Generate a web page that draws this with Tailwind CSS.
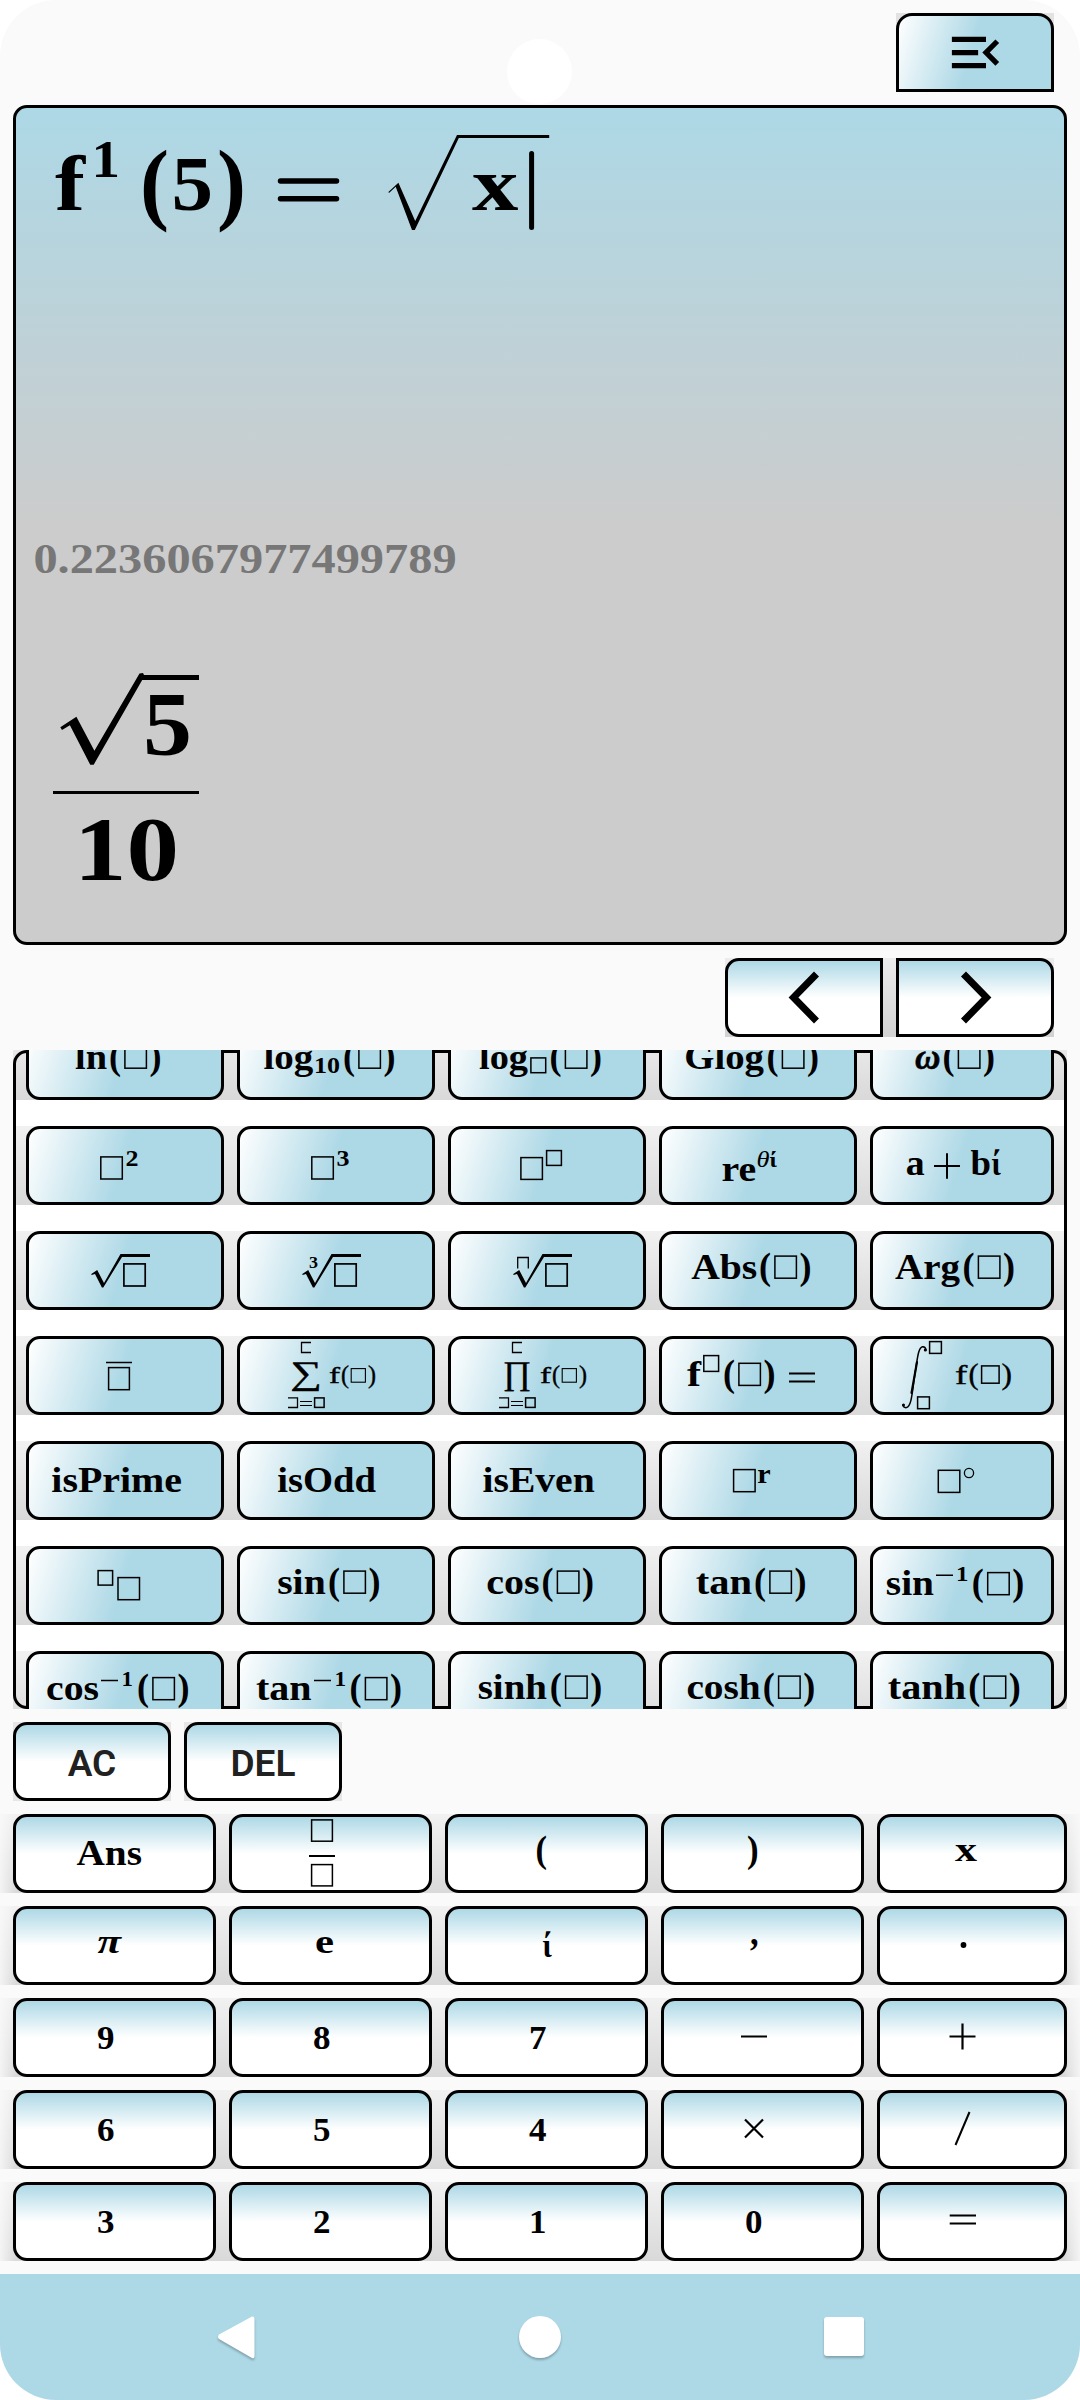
<!DOCTYPE html>
<html lang="en">
<head>
<meta charset="utf-8">
<title>Calculator</title>
<script src="https://cdn.jsdelivr.net/npm/@tailwindcss/browser@4"></script>
</head>
<body class="bg-white">
<main class="relative flex h-[2400px] w-[1080px] flex-col overflow-hidden rounded-[56px] bg-[#fafafa] font-['Liberation_Serif',serif]">
  <!-- camera cut-out -->
  <div class="absolute left-[507px] top-[39px] size-[65px] rounded-full bg-white"></div>

  <header class="flex h-[105px] justify-end pr-[26px] pt-[13px]">
    <div class="h-[79px] w-[158px] bg-[#e2e2e2]">
      <button aria-label="Open menu" class="flex size-full items-center justify-center rounded-t-[16px] border-3 border-black bg-[linear-gradient(107deg,#fff,#add8e6_48%)]">
        <svg class="size-[63px]" viewBox="0 0 24 24"><path d="M3 18h13v-2H3v2zm0-5h10v-2H3v2zm0-7v2h13V6H3zm18 9.59L17.42 12 21 8.41 19.59 7l-5 5 5 5L21 15.59z"/></svg>
      </button>
    </div>
  </header>

  <section class="mx-[13px] h-[840px] rounded-[14px] border-3 border-black bg-[linear-gradient(#add8e6,#ccc_50%)]">
    <svg id="display" class="-ml-[3px] -mt-[3px] h-[840px] w-[1054px]" viewBox="13 105 1054 840"></svg>
  </section>

  <div class="flex h-[105px] justify-end pr-[26px] pt-[13px]">
    <div class="flex h-[79px] w-[329px] justify-between bg-[linear-gradient(#ececec,#d2d2d2)]">
      <button aria-label="Left" class="w-[158px] rounded-l-[14px] border-3 border-black bg-[linear-gradient(#add8e6,#fff_50%)]">
        <svg class="-ml-[3px] -mt-[3px] h-[79px] w-[158px]" viewBox="0 0 158 79"><path d="M91.500 16L68.500 39.500 91.500 63" fill="none" stroke="#000" stroke-width="7"/></svg>
      </button>
      <button aria-label="Right" class="w-[158px] rounded-r-[14px] border-3 border-black bg-[linear-gradient(#add8e6,#fff_50%)]">
        <svg class="-ml-[3px] -mt-[3px] h-[79px] w-[158px]" viewBox="0 0 158 79"><path d="M67.500 16L90.500 39.500 67.500 63" fill="none" stroke="#000" stroke-width="7"/></svg>
      </button>
    </div>
  </div>

  <section class="relative mx-[13px] h-[659px] overflow-hidden bg-white">
    <div class="absolute inset-0 z-10 rounded-[14px] border-3 border-black"></div>
    <div id="functions" class="-mt-[29px] flex flex-col gap-[26px]"></div>
  </section>

  <div class="mb-[13px] mt-[13px] flex h-[79px] gap-[13px] pl-[13px] font-[Roboto,sans-serif] text-[37px] font-semibold text-[#212121]">
    <div class="w-[158px] bg-[#e6e6e6]"><button class="size-full rounded-[14px] border-3 border-black bg-[linear-gradient(#add8e6,#fff_50%)] pt-1">AC</button></div>
    <div class="w-[158px] bg-[#e6e6e6]"><button class="size-full rounded-[14px] border-3 border-black bg-[linear-gradient(#add8e6,#fff_50%)] pt-1">DEL</button></div>
  </div>

  <section id="keypad" class="flex flex-col gap-[13px]"></section>

  <nav class="mt-[13px] h-[126px] bg-[#add8e6]">
    <svg class="h-[126px] w-[1080px] drop-shadow-[0_2px_1px_rgba(0,0,0,0.25)]" viewBox="0 2274 1080 126" fill="#fff">
      <path d="M252 2316.500L219 2334.500Q217 2337 219 2339L252 2358Q254.500 2359 254.500 2356V2319Q254.500 2316 252 2316.500Z"/>
      <circle cx="540" cy="2337" r="21"/>
      <rect x="824" y="2317" width="40" height="39" rx="3"/>
    </svg>
  </nav>
</main>

<script>
// Text whose ink spans x0..x1 on the baseline y.
const T = (s, x0, x1, y, size, style = '') =>
  `<text x="${x0 - 1}" y="${y}" font-size="${size}" textLength="${x1 - x0 + 2}" lengthAdjust="spacingAndGlyphs" ${style}>${s}</text>`;
const IT = 'font-style="italic"';
const THIN = 'font-weight="400" stroke="#000" stroke-width="0.4"';
// Empty placeholder square.
const B = (x, y, w, h = w, sw = 1.5) =>
  `<rect x="${x + .6}" y="${y + .6}" width="${w - 1.2}" height="${h - 1.2}" fill="none" stroke="#000" stroke-width="${sw}"/>`;
const L = (d, sw = 1.3) => `<path d="${d}" fill="none" stroke="#000" stroke-width="${sw}"/>`;
// Parenthesised placeholder starting at x.
const P = (x, y = 47.5) => T('(', x, x + 10, y, 38) + B(x + 14.3, y - 23, 22.7, 23.3) + T(')', x + 40.5, x + 50.5, y, 38);
const root = '<path d="M65.300 43L71.200 39 78 52 94.500 23H124V26H96L77.300 56.500H75.900L69 43 65.500 44Z"/>' + B(97.3, 32.3, 22.5, 23.3, 1.7);
const bigOp = (s, x0, x1) =>
  L('M74 6.500H64.500V16.500H74') + T(s, x0, x1, 48, 33, THIN) +
  L('M51 61.800H60.500V71.500H51') + L('M63 65.500H75M63 69.500H75', 1.2) + B(77, 61.3, 10.7) +
  T('f', 93, 102, 47.3, 24, THIN) + T('(', 105, 111, 47, 25, THIN) + B(113.6, 32, 15.4, 14.8, 1.1) + T(')', 132, 138, 47, 25, THIN);

const functions = [
  [T('ln', 50, 80, 47.8, 35) + P(84),
   T('log', 27.5, 75.3, 47.8, 35) + T('10', 78, 102, 52.3, 23) + P(107),
   T('log', 32, 79, 47.8, 35) + B(82.3, 36.3, 16) + P(102.5),
   T('Glog', 26.3, 104, 47.8, 35) + P(108.5),
   T('ω', 46, 69.5, 47.8, 35, IT + ' stroke="#000" stroke-width="0.5"') + P(73.5)],
  [B(74.2, 30.3, 22.7, 23.3) + T('2', 100.6, 111.6, 40, 24),
   B(74.2, 30.3, 22.7, 23.3) + T('3', 100.6, 111.6, 40, 24),
   B(72.3, 31, 22.7, 23) + B(98, 24, 16),
   T('re', 63.5, 96.2, 55, 35) + T('θ', 98.5, 109.5, 40.7, 24, IT + ' font-weight="400"') + T('ί', 111.5, 117, 40.7, 22),
   T('a', 36.7, 53.6, 48.9, 35) + L('M64 40H90M77 27.300V52.700', 2) + T('b', 101.5, 120, 48.9, 35) + T('ί', 122.5, 130, 48.9, 33)],
  [root,
   root + T('3', 73, 80, 37.3, 17),
   root + L('M69.700 37.500V26.500H80.300V37.500'),
   T('Abs', 33.2, 97.3, 47.8, 35) + P(101),
   T('Arg', 26, 89, 47.8, 35) + P(93.5)],
  [L('M80 26.500H106', 1.3) + B(82, 31, 22, 23.3),
   bigOp('∑', 54.3, 84),
   bigOp('∏', 55.8, 82),
   T('f', 29, 41, 49.7, 35) + B(44.2, 19, 16, 17) + P(65, 49.7) + L('M130 37.500H156M130 45.500H156', 2.200),
   `<g fill="none" stroke="#000" stroke-linecap="round"><path d="M56 14Q55.500 10.500 52.500 10.800C48 12 47.500 22 44.500 41C42 58 41.500 70 36.500 71.600Q33.500 72 33 69" stroke-width="1.500"/><path d="M47 26L41.500 57" stroke-width="2.200"/></g><circle cx="55.300" cy="14" r="1.500"/><circle cx="33.500" cy="69" r="1.500"/>` + B(59, 5, 13) + B(47, 60.3, 13) +
   T('f', 86, 96.3, 47.7, 28, THIN) + T('(', 99.4, 107.5, 47.5, 30, THIN) + B(111, 29.3, 18.7, 18.5) + T(')', 132.5, 141, 47.5, 30, THIN)],
  [T('isPrime', 26.3, 155, 50.9, 35),
   T('isOdd', 41.2, 138, 50.9, 35),
   T('isEven', 35.5, 145.7, 50.9, 35),
   B(74, 28, 22.7, 23.3) + T('r', 99.3, 110.7, 42.3, 27),
   B(67.7, 28.7, 22.7, 23.3) + '<circle cx="99" cy="32" r="4.600" fill="none" stroke="#000" stroke-width="1.300"/>'],
  [B(71.5, 24, 15.7) + B(91.4, 31, 22.7, 23.3),
   T('sin', 41.2, 87.7, 48, 35) + P(92),
   T('cos', 39.3, 90.5, 48, 35) + P(94.5),
   T('tan', 37.7, 92, 47.8, 35) + P(96),
   T('sin', 16.8, 63, 49.2, 35) + L('M66 29.300H83', 1.5) + T('1', 87, 97.4, 35, 22) + P(102.8, 49)],
  [T('cos', 21, 72, 49.2, 35) + L('M75 29.500H92', 1.5) + T('1', 96.6, 106, 35, 22) + P(112, 49),
   T('tan', 20, 73.6, 49.2, 35) + L('M77 29.500H94', 1.5) + T('1', 98.4, 108, 35, 22) + P(113.5, 49),
   T('sinh', 30.7, 98, 47.9, 35) + P(102.7),
   T('cosh', 28.4, 100.7, 47.9, 35) + P(104.7),
   T('tanh', 18.8, 95, 47.9, 35) + P(99.3)],
];

const digit = s => T(s, 85, 100.5, 50.5, 34);
const keypad = [
  [T('Ans', 64.5, 128, 51.3, 35),
   B(82, 5.3, 22, 22.5) + L('M80 42H106', 2) + B(82, 50, 22, 22.5),
   T('(', 91.5, 101, 47.5, 38),
   T(')', 87, 96.6, 47.5, 38),
   T('x', 79, 99, 47.3, 33)],
  [T('π', 85.5, 107, 46.9, 34, IT),
   T('e', 87, 104, 47.3, 33),
   T('ί', 98.5, 106, 50.5, 33),
   T(',', 90, 96.6, 38.5, 38),
   '<circle cx="86.500" cy="39" r="2.900"/>'],
  [digit('9'), digit('8'), digit('7'), L('M80 38.500H106', 2), L('M72.500 38.500H98.500M85.500 25.500V51.500', 2.200)],
  [digit('6'), digit('5'), digit('4'), L('M84 29.500L102 47.500M102 29.500L84 47.500', 2.200), L('M78.500 55L92.500 22', 2)],
  [digit('3'), digit('2'), digit('1'), digit('0'), L('M72.700 33.500H99M72.700 41.500H99', 2.200)],
];

const svg = body => `<svg class="-ml-[3px] -mt-[3px] h-[79px] w-[180px]" viewBox="0 0 180 79" font-weight="700">${body}</svg>`;

document.getElementById('functions').innerHTML = functions.map(row =>
  `<div class="grid h-[79px] grid-cols-[198px_198px_198px_198px_184px] gap-[13px] bg-[linear-gradient(#f1f1f1,#d9d9d9)] pl-[13px]">` +
  row.map(k => `<button class="relative z-20 overflow-hidden rounded-[14px] border-3 border-black bg-[linear-gradient(107deg,#fff,#add8e6_49%)]">${svg(k)}</button>`).join('') +
  `</div>`).join('');

document.getElementById('keypad').innerHTML = keypad.map(row =>
  `<div class="grid h-[79px] grid-cols-[203px_203px_203px_203px_190px] gap-[13px] bg-[linear-gradient(90deg,#fafafacc,transparent_16px,transparent_1064px,#fafafacc),linear-gradient(#f1f1f1,#d9d9d9)] pl-[13px]">` +
  row.map(k => `<button class="overflow-hidden rounded-[14px] border-3 border-black bg-[linear-gradient(#add8e6,#fff_50%)]">${svg(k)}</button>`).join('') +
  `</div>`).join('');

document.getElementById('display').innerHTML = `<g font-weight="700">` +
  T('f', 56, 84, 209.7, 79) + T('1', 92.5, 119, 176.7, 53) + T('(', 141, 168, 213, 90) + T('5', 172.5, 212, 209.7, 78) + T(')', 218, 245, 213, 90) +
  L('M280.500 181H336.500M280.500 198.700H336.500', 5.5).replace('<path', '<path stroke-linecap="round"') +
  '<path d="M388.400 192L398.400 182.700 415.200 221 457 135H549.200V138H458.800L414.800 230H412L395.700 186.700 389 193Z"/>' +
  T('x', 473, 517.4, 209.7, 76) + L('M531.600 153.500V227.500', 5).replace('<path', '<path stroke-linecap="round"') +
  T('0.2236067977499789', 34.4, 455.6, 573, 42, 'fill="#777"') +
  '<path d="M60.300 727.300L76.400 716.700 94.400 750.700 139.500 673.500 143 673 144 675H199V680H142.200L93.700 764.700H90.200L69.900 725.300 62 730Z"/>' +
  T('5', 144, 191, 755.3, 90) + L('M53 792.500H199', 3) + T('10', 75, 178, 879.5, 90) + `</g>`;
</script>
</body>
</html>
